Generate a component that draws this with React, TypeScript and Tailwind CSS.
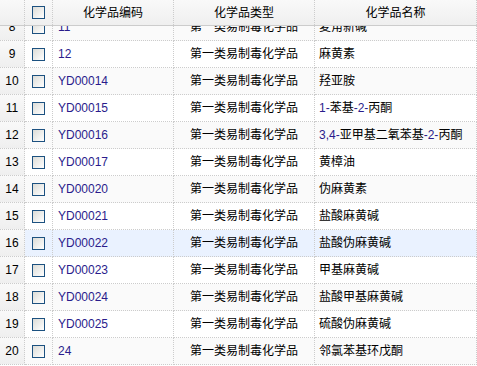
const ROWS: { no: number; code: string; type: string; name: string }[] = [
  { no: 8, code: "11", type: "第一类易制毒化学品", name: "麦角新碱" },
  { no: 9, code: "12", type: "第一类易制毒化学品", name: "麻黄素" },
  { no: 10, code: "YD00014", type: "第一类易制毒化学品", name: "羟亚胺" },
  { no: 11, code: "YD00015", type: "第一类易制毒化学品", name: "1-苯基-2-丙酮" },
  { no: 12, code: "YD00016", type: "第一类易制毒化学品", name: "3,4-亚甲基二氧苯基-2-丙酮" },
  { no: 13, code: "YD00017", type: "第一类易制毒化学品", name: "黄樟油" },
  { no: 14, code: "YD00020", type: "第一类易制毒化学品", name: "伪麻黄素" },
  { no: 15, code: "YD00021", type: "第一类易制毒化学品", name: "盐酸麻黄碱" },
  { no: 16, code: "YD00022", type: "第一类易制毒化学品", name: "盐酸伪麻黄碱" },
  { no: 17, code: "YD00023", type: "第一类易制毒化学品", name: "甲基麻黄碱" },
  { no: 18, code: "YD00024", type: "第一类易制毒化学品", name: "盐酸甲基麻黄碱" },
  { no: 19, code: "YD00025", type: "第一类易制毒化学品", name: "硫酸伪麻黄碱" },
  { no: 20, code: "24", type: "第一类易制毒化学品", name: "邻氯苯基环戊酮" },
];

const HOVER_ROW = 16;

function Check() {
  return (
    <span className="block w-[13px] h-[13px] border border-[#1c5180] bg-gradient-to-br from-[#dcdcd7] to-white" />
  );
}

// latin bits render with a bluish tint like the cleartype screenshot
function Mixed({ text }: { text: string }) {
  const parts = text.split(/([\x20-\x7e]+)/).filter(Boolean);
  return (
    <>
      {parts.map((p, i) =>
        /^[\x20-\x7e]+$/.test(p) ? (
          <span key={i} className="text-[#2a1c8c]">{p}</span>
        ) : (
          <span key={i}>{p}</span>
        )
      )}
    </>
  );
}

export default function App() {
  return (
    <div
      className="w-[477px] h-[366px] bg-white overflow-hidden text-[12px] text-black"
      style={{ fontFamily: '"Liberation Sans", "Noto Sans CJK SC", sans-serif' }}
    >
      <div className="relative z-10 flex h-[26px] border-b border-[#ccc] bg-gradient-to-b from-[#f9f9f9] to-[#efefef]">
        <div className="w-[25px] border-r border-dotted border-[#ccc]" />
        <div className="w-[28px] flex items-center justify-center border-r border-dotted border-[#ccc]">
          <Check />
        </div>
        <div className="w-[121px] flex items-center justify-center border-r border-dotted border-[#ccc]">化学品编码</div>
        <div className="w-[141px] flex items-center justify-center border-r border-dotted border-[#ccc]">化学品类型</div>
        <div className="w-[162px] flex items-center justify-center border-r border-dotted border-[#ccc]">化学品名称</div>
      </div>

      <div className="h-[340px] overflow-hidden">
        <div className="-mt-[12px]">
          {ROWS.map((r) => {
            const bg =
              r.no === HOVER_ROW ? "bg-[#eaf2ff]" : r.no % 2 === 0 ? "bg-[#fafafa]" : "bg-white";
            return (
              <div key={r.no} className={`flex h-[27px] ${bg}`}>
                <div className="w-[25px] flex items-center justify-center border-r border-b border-dotted border-[#ccc] bg-gradient-to-b from-[#f9f9f9] to-[#efefef]">
                  {r.no}
                </div>
                <div className="w-[28px] flex items-center justify-center border-r border-b border-dotted border-[#ccc]">
                  <Check />
                </div>
                <div className="w-[121px] flex items-center pl-[5px] border-r border-b border-dotted border-[#ccc] text-[#2a1c8c]">
                  {r.code}
                </div>
                <div className="w-[141px] flex items-center justify-center border-r border-b border-dotted border-[#ccc]">
                  {r.type}
                </div>
                <div className="w-[162px] flex items-center pl-[4px] border-r border-b border-dotted border-[#ccc] whitespace-nowrap overflow-hidden">
                  <Mixed text={r.name} />
                </div>
              </div>
            );
          })}
        </div>
      </div>
    </div>
  );
}
